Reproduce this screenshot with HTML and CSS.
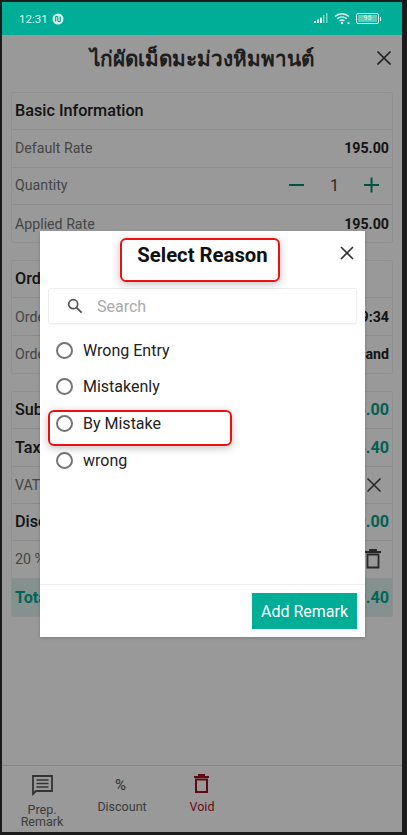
FILE: index.html
```html
<!DOCTYPE html>
<html lang="en">

<head>
    <meta charset="UTF-8">
    <meta name="viewport" content="width=device-width, initial-scale=1.0">
    <title>Select Reason</title>
    <link rel="stylesheet" href="styles.css">
</head>

<body>

    <div class="phone">
        <!-- Status bar -->
        <div class="status-bar">
            <span class="status-time">12:31</span>
            <svg class="status-app" width="12" height="12" viewBox="0 0 12 12">
                <circle cx="6" cy="6" r="5.5" fill="#d8f3ee"/>
                <path d="M3.6 8.6V4.6c0-1.6 2.2-1.6 2.2 0v2.8c0 1.6 2.4 1.6 2.4 0V3.4" fill="none" stroke="#00a992" stroke-width="1.2"/>
            </svg>
            <div class="status-icons">
                <svg width="15" height="11" viewBox="0 0 15 11">
                    <rect x="0" y="8" width="2" height="2" fill="#e0f5f1"/>
                    <rect x="3" y="6.5" width="2" height="3.5" fill="#e0f5f1"/>
                    <rect x="6" y="4.5" width="2" height="5.5" fill="#e0f5f1"/>
                    <rect x="9" y="2" width="1.5" height="8" fill="#7fd6c8"/>
                    <rect x="12" y="0" width="1.5" height="10" fill="#7fd6c8"/>
                </svg>
                <svg class="status-wifi" width="17" height="13" viewBox="0 0 17 13">
                    <path d="M1 4.5C5 .8 11 .8 15 4.5M3.2 6.8c2.8-2.5 6.8-2.5 9.6 0M5.5 9c1.5-1.2 3.5-1.2 5 0" fill="none" stroke="#e6f7f4" stroke-width="1.4"/>
                    <circle cx="8" cy="11" r="1.2" fill="#e6f7f4"/>
                    <circle cx="14.5" cy="11" r="1.2" fill="#a8e4da"/>
                </svg>
                <div class="battery"><span class="battery-level">95</span></div>
                <span class="battery-tip"></span>
            </div>
        </div>

        <div class="screen">
            <div class="page-head">
                <h1>ไก่ผัดเม็ดมะม่วงหิมพานต์</h1>
                <svg class="head-close" width="16" height="16" viewBox="0 0 16 16">
                    <path d="M1.5 1.5l13 13M14.5 1.5l-13 13" stroke="#333" stroke-width="1.7" fill="none"/>
                </svg>
            </div>

            <div class="content">
                <div class="card">
                    <div class="row row-title"><span>Basic Information</span></div>
                    <div class="row"><span class="label">Default Rate</span><span class="value">195.00</span></div>
                    <div class="row row-qty">
                        <span class="label">Quantity</span>
                        <div class="qty">
                            <svg width="16" height="16" viewBox="0 0 16 16"><path d="M0 8h15" stroke="#00897b" stroke-width="2"/></svg>
                            <span class="qty-num">1</span>
                            <svg width="16" height="16" viewBox="0 0 16 16"><path d="M0 8h15M7.5 .5v15" stroke="#00897b" stroke-width="2"/></svg>
                        </div>
                    </div>
                    <div class="row"><span class="label">Applied Rate</span><span class="value">195.00</span></div>
                </div>

                <div class="card">
                    <div class="row row-title"><span>Order Information</span></div>
                    <div class="row"><span class="label">Order Date</span><span class="value">12:09:34</span></div>
                    <div class="row"><span class="label">Order Type</span><span class="value">Thailand</span></div>
                </div>

                <div class="card">
                    <div class="row row-title"><span>Subtotal</span><span class="value-teal">195.00</span></div>
                    <div class="row row-title"><span>Tax</span><span class="value-teal">13.40</span></div>
                    <div class="row">
                        <span class="label">VAT</span>
                        <svg class="row-close" width="16" height="16" viewBox="0 0 16 16"><path d="M1.5 1.5l13 13M14.5 1.5l-13 13" stroke="#444" stroke-width="1.6" fill="none"/></svg>
                    </div>
                    <div class="row row-title"><span>Discount</span><span class="value-teal">39.00</span></div>
                    <div class="row">
                        <span class="label">20 %</span>
                        <svg class="row-trash" width="16" height="20" viewBox="0 0 16 20"><path d="M0 3h16M5 3V1h6v2M2.5 5.5h11V18.5h-11z" stroke="#444" stroke-width="1.8" fill="none"/></svg>
                    </div>
                    <div class="row row-total"><span>Total</span><span>169.40</span></div>
                </div>
            </div>

            <div class="bottom-bar">
                <div class="bar-item bar-remark">
                    <svg width="22" height="22" viewBox="0 0 22 22">
                        <path d="M2 2h19v15H5l-3 3z" fill="none" stroke="#555" stroke-width="1.8"/>
                        <path d="M5.5 6h12M5.5 9.5h12M5.5 13h12" stroke="#555" stroke-width="1.6"/>
                    </svg>
                    <span>Prep.<br>Remark</span>
                </div>
                <div class="bar-item bar-discount">
                    <span class="percent">%</span>
                    <span>Discount</span>
                </div>
                <div class="bar-item bar-void">
                    <svg width="16" height="20" viewBox="0 0 16 20"><path d="M0 3h15M5 3V1h5v2M2 5.5h11V18H2z" stroke="#a01020" stroke-width="2" fill="none"/></svg>
                    <span>Void</span>
                </div>
            </div>

            <div class="overlay"></div>

            <!-- Reason dialog -->
            <div class="modal">
                <div class="modal-head">
                    <h2>Select Reason</h2>
                    <svg class="modal-close" width="14" height="14" viewBox="0 0 14 14">
                        <path d="M1 1l12 12M13 1L1 13" stroke="#333" stroke-width="1.7" fill="none"/>
                    </svg>
                </div>
                <div class="search-box">
                    <svg width="16" height="16" viewBox="0 0 16 16">
                        <circle cx="6.2" cy="6.2" r="4.5" fill="none" stroke="#555" stroke-width="1.7"/>
                        <path d="M9.6 9.6l5 5" stroke="#555" stroke-width="1.9"/>
                    </svg>
                    <span>Search</span>
                </div>
                <div class="reason-list">
                    <div class="reason"><span class="radio"></span>Wrong Entry</div>
                    <div class="reason"><span class="radio"></span>Mistakenly</div>
                    <div class="reason"><span class="radio"></span>By Mistake</div>
                    <div class="reason"><span class="radio"></span>wrong</div>
                </div>
                <div class="modal-foot">
                    <button class="add-btn">Add Remark</button>
                </div>
            </div>

            <!-- Red annotation boxes -->
            <div class="mark mark-title"></div>
            <div class="mark mark-reason"></div>
        </div>
    </div>

</body>

</html>
```

FILE: styles.css
```css
* {
    box-sizing: border-box;
    margin: 0;
    padding: 0;
    font-family: Roboto, "Noto Sans", sans-serif;
}

body {
    background: #1b1b1b;
    height: 835px;
    overflow: hidden;
}

.phone {
    width: 400px;
    height: 830px;
    margin: 2px 0 0 2px;
    display: flex;
    flex-direction: column;
}

.status-bar {
    height: 33px;
    flex: none;
    display: flex;
    align-items: center;
    padding: 0 0 0 17px;
    background: #00ad96;
    color: #dff5f1;
    font-size: 11.5px;
}

.status-app {
    margin-left: 4px;
}

.status-icons {
    margin-left: auto;
    margin-right: 21px;
    display: flex;
    align-items: center;
}

.status-wifi {
    margin-left: 5px;
}

.battery {
    width: 23px;
    height: 11px;
    margin-left: 5px;
    border: 1px solid #dff5f1;
    border-radius: 2px;
    padding: 1px;
    display: flex;
}

.battery-level {
    flex: 1;
    background: #5fcbb9;
    color: #e6f7f4;
    font-size: 7px;
    line-height: 7px;
    text-align: center;
}

.battery-tip {
    width: 1px;
    height: 4px;
    margin-left: 1px;
    background: #dff5f1;
}

.screen {
    flex: 1;
    position: relative;
    background: #fff;
    display: flex;
    flex-direction: column;
}

.page-head {
    height: 57px;
    flex: none;
    position: relative;
    display: flex;
    align-items: center;
    justify-content: center;
}

.page-head h1 {
    font-family: "DejaVu Sans", "Noto Sans", sans-serif;
    font-size: 20.7px;
    font-weight: 700;
    color: #333;
    transform: translateY(-5px);
}

.head-close {
    position: absolute;
    right: 10px;
    top: 15px;
}

.content {
    flex: 1;
    padding: 0 9px;
    display: flex;
    flex-direction: column;
    gap: 17px;
}

.card {
    border: 1px solid #f0f0f0;
    border-radius: 2px;
}

.row {
    height: 37.3px;
    display: flex;
    align-items: center;
    justify-content: space-between;
    padding: 0 3px;
    border-bottom: 1px solid #ededed;
    font-size: 14.2px;
}

.row:last-child {
    border-bottom: none;
}

.row-title {
    padding-bottom: 1px;
    font-size: 16.2px;
    font-weight: 500;
    color: #222;
}

.row-qty {
    padding-bottom: 1px;
}

.label {
    color: #757575;
}

.value {
    font-weight: 700;
    color: #222;
}

.value-teal {
    color: #00a08a;
    font-weight: 700;
}

.row-total {
    background: #dcf2ee;
    color: #00a992;
    font-size: 16.2px;
    font-weight: 700;
}

.row-close {
    margin-right: 7px;
}

.row-trash {
    margin-right: 8px;
}

.qty {
    display: flex;
    align-items: center;
    gap: 25px;
    margin-right: 9px;
}

.qty-num {
    color: #444;
    font-size: 16px;
}

.bottom-bar {
    height: 67px;
    flex: none;
    border-top: 1px solid #ddd;
    position: relative;
    display: flex;
    color: #666;
    font-size: 12.5px;
    line-height: 12px;
}

.bar-item {
    display: flex;
    flex-direction: column;
    align-items: center;
    text-align: center;
    padding-top: 8px;
}

.bar-remark {
    width: 80px;
}

.bar-remark span {
    margin-top: 8px;
}

.bar-discount {
    width: 80px;
}

.percent {
    height: 27px;
    padding-top: 4px;
    padding-right: 3px;
    font-size: 15px;
    line-height: 15px;
    font-weight: 500;
}

.bar-void {
    width: 80px;
    color: #b01225;
}

.bar-void span {
    margin-top: 7px;
}

.overlay {
    position: absolute;
    inset: 0;
    background: rgba(0, 0, 0, 0.4);
}

.modal {
    position: absolute;
    left: 38px;
    top: 196px;
    width: 325px;
    height: 406px;
    background: #fff;
    display: flex;
    flex-direction: column;
    box-shadow: 0 1px 3px rgba(0, 0, 0, 0.2);
}

.modal-head {
    height: 57px;
    flex: none;
    position: relative;
    display: flex;
    justify-content: center;
    padding-top: 10px;
}

.modal-head h2 {
    font-size: 20.3px;
    font-weight: 700;
    line-height: 28px;
    color: #111;
}

.modal-close {
    position: absolute;
    right: 11px;
    top: 15px;
}

.search-box {
    height: 36px;
    flex: none;
    margin: 0 8px;
    border: 1px solid #eee;
    border-radius: 2px;
    display: flex;
    align-items: center;
    padding-left: 18px;
    color: #aaa;
    font-size: 16px;
    box-shadow: 0 1px 1px rgba(0, 0, 0, 0.04);
}

.search-box span {
    margin-left: 14px;
}

.reason-list {
    flex: 1;
    padding: 8px 16px 0;
}

.reason {
    height: 36.6px;
    display: flex;
    align-items: center;
    gap: 10px;
    font-size: 16px;
    color: #222;
}

.radio {
    width: 17px;
    height: 17px;
    border: 2px solid #757575;
    border-radius: 50%;
}

.modal-foot {
    height: 53px;
    flex: none;
    border-top: 1px solid #eee;
    display: flex;
    justify-content: flex-end;
    padding: 8px 8px 0 0;
}

.add-btn {
    width: 105px;
    height: 36px;
    border: none;
    background: #00ad96;
    color: #fff;
    font-size: 16px;
}

.mark {
    position: absolute;
    border: 2px solid #ee1010;
    border-radius: 6px;
    box-shadow: 0 2px 8px rgba(0, 0, 0, 0.25);
}

.mark-title {
    left: 118px;
    top: 203px;
    width: 160px;
    height: 44px;
}

.mark-reason {
    left: 46px;
    top: 375px;
    width: 184px;
    height: 36px;
}
```
